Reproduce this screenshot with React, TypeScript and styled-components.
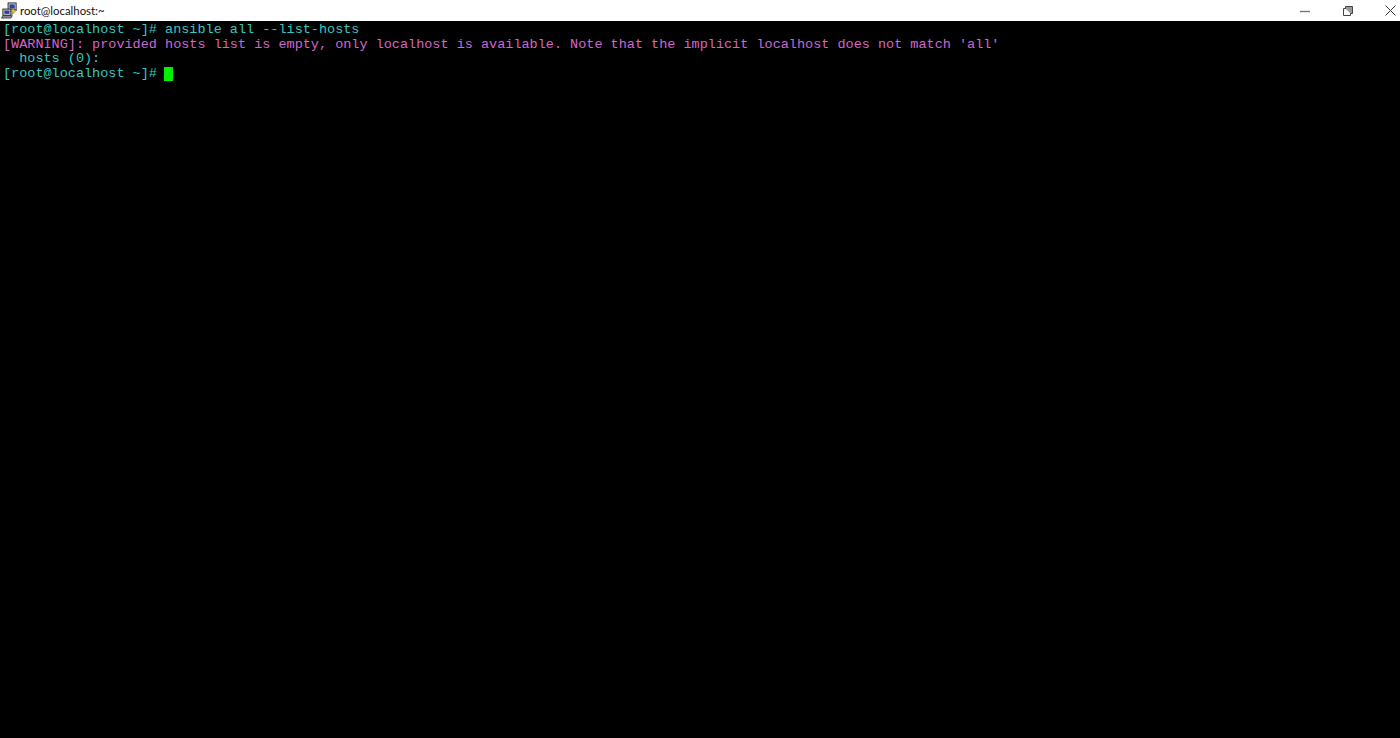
import { FC } from 'react';
import styled, { createGlobalStyle } from 'styled-components';

const GlobalStyle = createGlobalStyle`
  html, body {
    margin: 0;
    padding: 0;
    height: 100%;
    background: #000;
    overflow: hidden;
  }
`;

const App: FC = () => {
  return (
    <Wrapper>
      <GlobalStyle />
      <TitleBar>
        <TitleLeft>
          <PuttyIcon viewBox='0 0 18 18'>
            <rect x='7.5' y='1' width='8.5' height='7.5' fill='#d8dbe2' stroke='#222' strokeWidth='1' />
            <rect x='9' y='2.5' width='5.5' height='4.5' fill='#2b3f9e' />
            <rect x='2' y='7.5' width='8.5' height='6.5' fill='#d8dbe2' stroke='#222' strokeWidth='1' />
            <rect x='3.5' y='9' width='5.5' height='3.5' fill='#2b3f9e' />
            <path d='M0.5 17 L10.5 17 L12 14.5 L2 14.5 Z' fill='#9a9aa6' stroke='#222' strokeWidth='0.8' />
            <path d='M10 10 L14 5.5 L13.5 8.5 L16.5 8.5 L11.5 13.5 L12 10 Z' fill='#f2d21f' stroke='#333' strokeWidth='0.5' />
          </PuttyIcon>
          <WindowTitle>root@localhost:~</WindowTitle>
        </TitleLeft>
        <WindowControls>
          <ControlButton>
            <svg width='10' height='10' viewBox='0 0 10 10'>
              <path d='M0 5.5 H10' stroke='#777' strokeWidth='1.4' />
            </svg>
          </ControlButton>
          <ControlButton>
            <svg width='10' height='10' viewBox='0 0 10 10'>
              <path d='M0.5 2.5 H7.5 V9.5 H0.5 Z' fill='#fff' stroke='#444' strokeWidth='1' />
              <path d='M2.5 2.5 V0.5 H9.5 V7.5 H7.5' fill='#999' stroke='#444' strokeWidth='1' />
            </svg>
          </ControlButton>
          <ControlButton>
            <svg width='11' height='11' viewBox='0 0 11 11'>
              <path d='M0.5 0.5 L10.5 10.5 M10.5 0.5 L0.5 10.5' stroke='#333' strokeWidth='1' />
            </svg>
          </ControlButton>
        </WindowControls>
      </TitleBar>

      <Terminal>
        <Line>[root@localhost ~]# ansible all --list-hosts</Line>
        <Line color='#d066d0'>[WARNING]: provided hosts list is empty, only localhost is available. Note that the implicit localhost does not match 'all'</Line>
        <Line>  hosts (0):</Line>
        <Line>[root@localhost ~]# <Cursor /></Line>
      </Terminal>
    </Wrapper>
  );
};

const Wrapper = styled.div`
  width: 100%;
  height: 100vh;
  display: flex;
  flex-direction: column;
  background: #000;
`;

const TitleBar = styled.div`
  height: 21px;
  flex-shrink: 0;
  background: #fff;
  display: flex;
  justify-content: space-between;
  align-items: center;
`;

const TitleLeft = styled.div`
  display: flex;
  align-items: center;
  gap: 2px;
  padding-left: 1px;
`;

const PuttyIcon = styled.svg`
  width: 17px;
  height: 17px;
`;

const WindowTitle = styled.span`
  font-family: Lato, 'Liberation Sans', sans-serif;
  font-size: 11.4px;
  color: #111;
`;

const WindowControls = styled.div`
  display: flex;
  align-items: center;
  margin-right: -12px;
`;

const ControlButton = styled.div`
  width: 43px;
  height: 21px;
  display: flex;
  align-items: center;
  justify-content: center;
`;

const Terminal = styled.div`
  flex: 1;
  padding: 2px 3px;
  background: #000;
  display: flex;
  flex-direction: column;
`;

const Line = styled.div<{ color?: string }>`
  height: 14.6px;
  line-height: 14.6px;
  white-space: pre;
  font-family: 'Liberation Mono', monospace;
  font-size: 13.5px;
  color: ${(props) => props.color || '#35c8c0'};
`;

const Cursor = styled.span`
  display: inline-block;
  width: 9px;
  height: 14px;
  margin-left: -1.5px;
  background: #00f000;
  vertical-align: top;
`;

export default App;
